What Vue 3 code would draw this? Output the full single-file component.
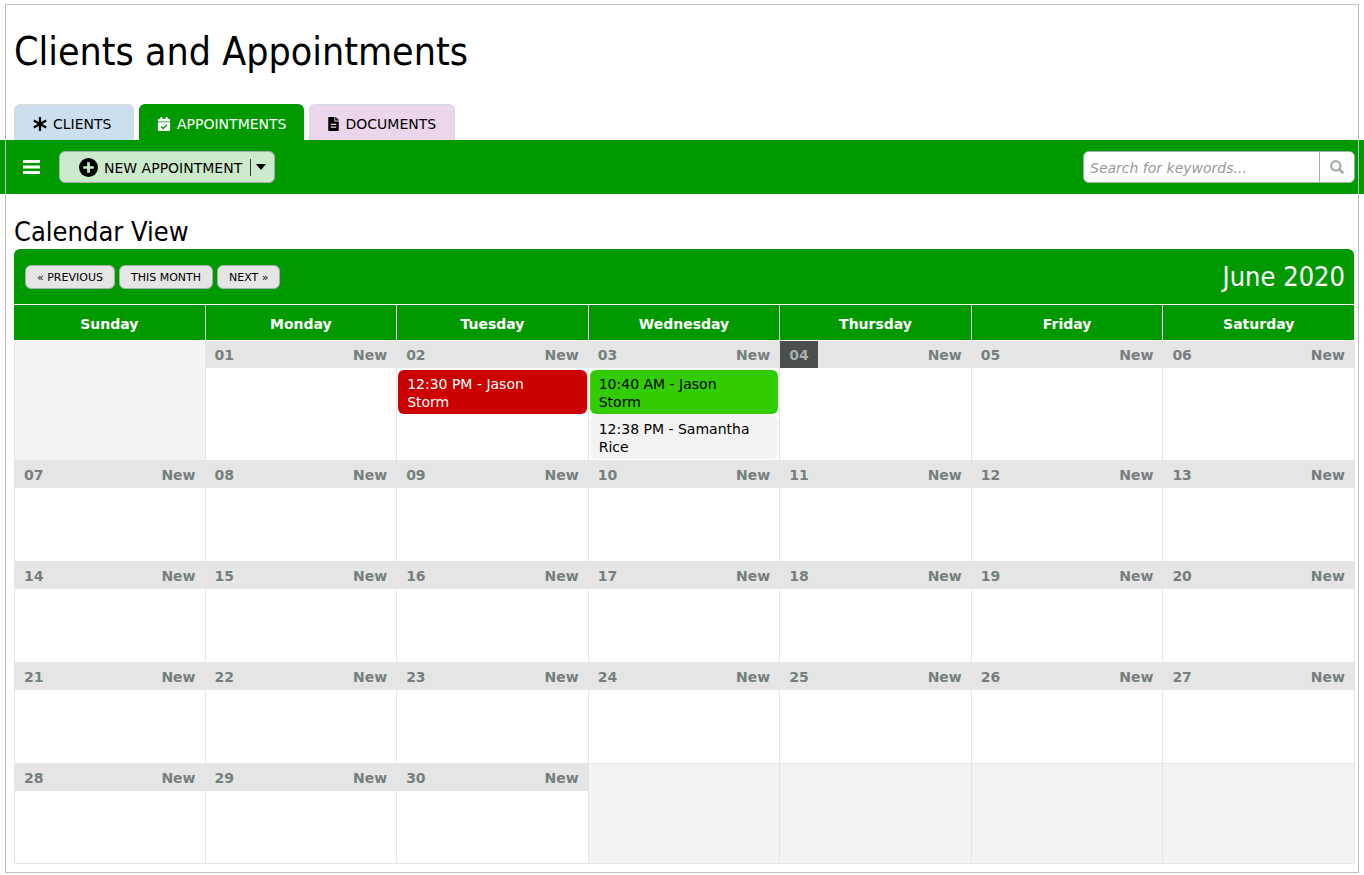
<script setup>
import { ref, computed } from 'vue'

const tabs = [
  { key: 'clients', label: 'CLIENTS' },
  { key: 'appointments', label: 'APPOINTMENTS' },
  { key: 'documents', label: 'DOCUMENTS' },
]
const activeTab = ref('appointments')
const keywords = ref('')

const weekDays = ['Sunday', 'Monday', 'Tuesday', 'Wednesday', 'Thursday', 'Friday', 'Saturday']

// June 2020 starts on a Monday
const firstDay = 1
const daysInMonth = 30
const today = 4

const events = {
  2: [{ text: '12:30 PM - Jason Storm', type: 'red' }],
  3: [
    { text: '10:40 AM - Jason Storm', type: 'green' },
    { text: '12:38 PM - Samantha Rice', type: 'plain' },
  ],
}

const weeks = computed(() => {
  const rows = []
  for (let i = 0; i < firstDay + daysInMonth; i += 7) {
    const row = []
    for (let j = 0; j < 7; j++) {
      const day = i + j - firstDay + 1
      row.push(day > 0 && day <= daysInMonth ? day : null)
    }
    rows.push(row)
  }
  return rows
})

const pad = (n) => String(n).padStart(2, '0')
</script>

<template>
  <div class="page">
    <h1 class="title">Clients and Appointments</h1>

    <nav class="tabs">
      <a
        v-for="tab in tabs"
        :key="tab.key"
        href="#"
        class="tab"
        :class="['tab-' + tab.key, { active: activeTab === tab.key }]"
        @click.prevent="activeTab = tab.key"
      >
        <svg v-if="tab.key === 'clients'" class="tab-icon" viewBox="0 0 14 14">
          <path d="M7 0V14M0.800 3.500L13.200 10.500M13.200 3.500L0.800 10.500" stroke="currentColor" stroke-width="2.300" fill="none" />
        </svg>
        <svg v-else-if="tab.key === 'appointments'" class="tab-icon" viewBox="0 0 448 512">
          <path fill="currentColor" d="M436 160H12c-6.600 0-12-5.400-12-12v-36c0-26.500 21.500-48 48-48h48V12c0-6.600 5.400-12 12-12h40c6.600 0 12 5.400 12 12v52h128V12c0-6.600 5.400-12 12-12h40c6.600 0 12 5.400 12 12v52h48c26.500 0 48 21.500 48 48v36c0 6.600-5.400 12-12 12zM12 192h424c6.600 0 12 5.400 12 12v260c0 26.500-21.500 48-48 48H48c-26.500 0-48-21.500-48-48V204c0-6.600 5.400-12 12-12z" />
          <path d="M120 345l75 76 137-136" stroke="#090" stroke-width="48" fill="none" />
        </svg>
        <svg v-else class="tab-icon doc-icon" viewBox="0 0 384 512">
          <path fill="currentColor" d="M224 136V0H24C10.700 0 0 10.700 0 24v464c0 13.300 10.700 24 24 24h336c13.300 0 24-10.700 24-24V160H248c-13.200 0-24-10.800-24-24zm160-14.100v6.100H256V0h6.100c6.400 0 12.500 2.500 17 7l97.900 98c4.500 4.500 7 10.600 7 16.900z" />
          <path d="M90 270h204M90 370h204" stroke="#ebd6eb" stroke-width="38" />
        </svg>
        <span>{{ tab.label }}</span>
      </a>
    </nav>

    <div class="toolbar">
      <button class="menu-btn" type="button" aria-label="Menu">
        <svg width="17" height="14" viewBox="0 0 17 14">
          <path d="M0 0h17v3H0zM0 5.500h17v3H0zM0 11h17v3H0z" fill="#fff" />
        </svg>
      </button>
      <button class="new-btn" type="button">
        <svg class="plus" viewBox="0 0 18 18">
          <circle cx="9" cy="9" r="9" />
          <path d="M9 4v10M4 9h10" stroke="#cceacc" stroke-width="2.600" />
        </svg>
        <span class="new-label">NEW APPOINTMENT</span>
        <span class="divider"></span>
        <svg class="caret" viewBox="0 0 10 6"><path d="M0 0h10L5 6z" /></svg>
      </button>
      <form class="search" @submit.prevent>
        <input v-model="keywords" type="text" placeholder="Search for keywords..." aria-label="Search for keywords" />
        <button type="submit" aria-label="Search">
          <svg width="14" height="14" viewBox="0 0 14 14" fill="none" stroke="#a3adad">
            <circle cx="5.800" cy="5.800" r="4.700" stroke-width="2.200" />
            <path d="M9 9l4.200 4.200" stroke-width="2.800" />
          </svg>
        </button>
      </form>
    </div>

    <h2 class="subtitle">Calendar View</h2>

    <div class="cal-head">
      <div class="cal-nav">
        <button type="button">« PREVIOUS</button>
        <button type="button">THIS MONTH</button>
        <button type="button">NEXT »</button>
      </div>
      <div class="month">June 2020</div>
    </div>

    <table class="calendar">
      <thead>
        <tr>
          <th v-for="name in weekDays" :key="name" scope="col">{{ name }}</th>
        </tr>
      </thead>
      <tbody>
        <tr v-for="(week, i) in weeks" :key="i">
          <td v-for="(day, j) in week" :key="j" :class="{ empty: !day }">
            <template v-if="day">
              <div class="day-bar">
                <a href="#" class="day" :class="{ today: day === today }">{{ pad(day) }}</a>
                <a href="#" class="new">New</a>
              </div>
              <div v-if="events[day]" class="events">
                <a v-for="item in events[day]" :key="item.text" href="#" class="event" :class="item.type">{{ item.text }}</a>
              </div>
            </template>
          </td>
        </tr>
      </tbody>
    </table>
  </div>
</template>

<style>
body {
  background: #fff;
}
</style>

<style scoped>
.page {
  position: relative;
  margin: 4px 5px 2px;
  padding: 1px 0 9px;
  font: 14px/18px Verdana, "DejaVu Sans", sans-serif;
  color: #000;
}
/* the frame line runs over the full width toolbar */
.page::after {
  content: '';
  position: absolute;
  inset: 0;
  border: 1px solid #c0c0c0;
  pointer-events: none;
}
a {
  color: inherit;
  text-decoration: none;
}
button {
  font: inherit;
  color: inherit;
  cursor: pointer;
}
.title {
  margin: 0;
  padding: 23px 9px 28px;
  font: 39px/48px Tahoma, "DejaVu Sans Condensed", "Noto Sans", sans-serif;
}
.tabs {
  display: flex;
  gap: 5px;
  padding: 0 9px;
}
.tab {
  display: flex;
  align-items: center;
  gap: 6px;
  height: 36px;
  min-width: 120px;
  padding: 2px 18px 0;
  box-sizing: border-box;
  border: 1px solid #d5dada;
  border-bottom: 0;
  border-radius: 6px 6px 0 0;
}
.tab-clients {
  background: #ccdfee;
}
.tab-appointments {
  padding: 2px 17px 0;
  border-color: #090;
  background: #090;
  color: #fff;
}
.tab-documents {
  background: #ebd6eb;
}
.tab-icon {
  width: 14px;
  height: 14px;
}
.doc-icon {
  width: 11px;
}
.toolbar {
  display: flex;
  align-items: center;
  height: 54px;
  margin: 0 -5px;
  padding: 0 9px 0 23px;
  background: #090;
}
.menu-btn {
  display: flex;
  margin-right: 19px;
  padding: 0;
  border: 0;
  background: none;
}
.new-btn {
  display: flex;
  align-items: center;
  height: 32px;
  padding: 0 8px 0 19px;
  border: 1px solid #a3adad;
  border-radius: 6px;
  background: #cceacc;
}
.new-label {
  padding-top: 2px;
}
.plus {
  width: 19px;
  height: 19px;
  margin-right: 6px;
}
.divider {
  width: 1px;
  height: 17px;
  margin: 0 5px 0 8px;
  background: #333;
}
.caret {
  width: 10px;
  height: 6px;
}
.search {
  display: flex;
  width: 272px;
  height: 32px;
  margin-left: auto;
  box-sizing: border-box;
  border: 1px solid #a3adad;
  border-radius: 6px;
  background: #fff;
  overflow: hidden;
}
.search input {
  flex: 1;
  min-width: 0;
  padding: 2px 6px 0;
  border: 0;
  outline: 0;
  font: inherit;
}
.search input::placeholder {
  color: #999;
  font-style: italic;
}
.search button {
  display: flex;
  align-items: center;
  justify-content: center;
  width: 35px;
  padding: 0;
  border: 0;
  border-left: 1px solid #a3adad;
  background: #fff;
}
.subtitle {
  margin: 0;
  padding: 21px 9px 0;
  font: 27px/34px Tahoma, "DejaVu Sans Condensed", "Noto Sans", sans-serif;
}
.cal-head {
  display: flex;
  align-items: center;
  justify-content: space-between;
  height: 55px;
  margin: 0 5px 0 9px;
  padding: 0 9px 0 11px;
  box-sizing: border-box;
  border-radius: 6px 6px 0 0;
  background: #090;
}
.cal-nav {
  display: flex;
  gap: 4px;
}
.cal-nav button {
  height: 24px;
  padding: 2px 11px 0;
  border: 1px solid #a3adad;
  border-radius: 6px;
  background: #e5e5e5;
  font-size: 11px;
}
.month {
  font: 27px/34px Tahoma, "DejaVu Sans Condensed", "Noto Sans", sans-serif;
  color: #fff;
}
.calendar {
  width: calc(100% - 13px);
  margin: 0 4px 0 9px;
  table-layout: fixed;
  border-collapse: separate;
  border-spacing: 0;
}
th {
  height: 36px;
  padding: 2px 0 0;
  box-sizing: border-box;
  border-top: 1px solid #fff;
  border-right: 1px solid #fff;
  background: #090;
  color: #fff;
}
td {
  height: 101px;
  padding: 0;
  box-sizing: border-box;
  border-top: 1px solid #e5e5e5;
  border-right: 1px solid #e5e5e5;
  vertical-align: top;
}
td:first-child {
  border-left: 1px solid #e5e5e5;
}
tbody tr:first-child td {
  height: 120px;
  border-top-color: #fff;
}
tbody tr:last-child td {
  border-bottom: 1px solid #e5e5e5;
}
.empty {
  background: #f3f3f3;
}
/* the bar covers the cell line on its right */
.day-bar {
  display: flex;
  justify-content: space-between;
  margin-right: -1px;
  padding-right: 1px;
  background: #e5e5e5;
  color: #757f7f;
  font-weight: bold;
  line-height: 25px;
}
.day,
.new {
  padding: 2px 9px 0;
}
.today {
  background: #494e4e;
  color: #a8b0b0;
}
.events {
  display: flex;
  flex-direction: column;
  gap: 1px;
  padding: 2px 1px 1px;
}
.event {
  padding: 5px 20px 3px 9px;
  border-radius: 6px;
}
.red {
  background: #c00;
  color: #fff;
}
.green {
  background: #3c0;
}
.plain {
  background: #f3f3f3;
}
</style>
